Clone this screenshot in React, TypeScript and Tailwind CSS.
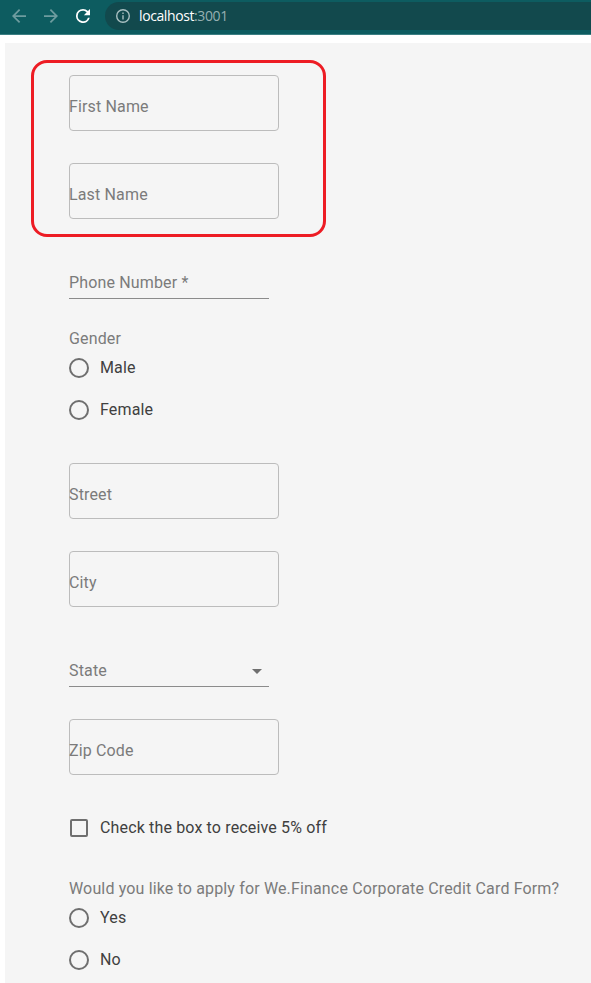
import React from "react";

function Outlined({ label, className = "" }: { label: string; className?: string }) {
  return (
    <div className={`flex h-14 w-[210px] shrink-0 items-end rounded-[4px] border border-[#bcbcbc] pb-[11px] ${className}`}>
      <span className="-ml-px h-6 whitespace-nowrap leading-6 text-[#7b7b7b]">{label}</span>
    </div>
  );
}

function Radio({ label, className = "" }: { label: string; className?: string }) {
  return (
    <div className={`flex h-[42px] shrink-0 items-center ${className}`}>
      <span className="h-5 w-5 rounded-full border-2 border-[#6f6f6f]" />
      <span className="ml-[11px] text-[#404040]">{label}</span>
    </div>
  );
}

export default function App() {
  return (
    <div className="flex h-[983px] w-[591px] flex-col overflow-hidden bg-white font-[Roboto,sans-serif] text-base leading-6 tracking-[0.15px]">
      <header className="flex h-[35px] shrink-0 items-center border-b border-[#3b7f83] bg-[#0d5c60] pb-[2px]">
        <svg className="ml-3 h-3.5 w-3.5" viewBox="4 4 16 16" fill="#6e9c9f">
          <path d="M20 11H7.83l5.59-5.59L12 4l-8 8 8 8 1.41-1.41L7.83 13H20z" />
        </svg>
        <svg className="ml-[18px] h-3.5 w-3.5" viewBox="4 4 16 16" fill="#6e9c9f">
          <path d="m12 4-1.41 1.41L16.17 11H4v2h12.17l-5.58 5.59L12 20l8-8z" />
        </svg>
        <svg className="ml-[18px] h-3.5 w-3.5" viewBox="4 4 16 16" fill="#fff">
          <path d="M17.65 6.35A7.95 7.95 0 0 0 12 4a8 8 0 1 0 7.73 10h-2.08A6 6 0 1 1 12 6c1.66 0 3.14.69 4.22 1.78L13 11h7V4z" />
        </svg>
        <div className="ml-[15px] flex h-7 flex-1 items-center rounded-l-full bg-[#12494d] pl-[11px]">
          <svg className="h-3.5 w-3.5" viewBox="2 2 20 20" fill="#a9bfc1">
            <path d="M11 7h2v2h-2zm0 4h2v6h-2zm1-9a10 10 0 1 0 0 20 10 10 0 0 0 0-20m0 18a8 8 0 1 1 0-16 8 8 0 0 1 0 16" />
          </svg>
          <span className="ml-[9px] font-['Open_Sans',sans-serif] text-[14px] tracking-[-0.4px] text-white">
            localhost<span className="text-[#96b0b2]">:3001</span>
          </span>
        </div>
      </header>
      <main className="relative ml-[5px] mt-2 flex flex-1 flex-col bg-[#f5f5f5] pl-16 pt-8">
        <div className="absolute left-[26px] top-[17px] h-[177px] w-[295px] rounded-[16px] border-[3px] border-[#ed1c24]" />
        <Outlined label="First Name" />
        <Outlined label="Last Name" className="mt-8" />
        <div className="mt-[52px] h-7 w-[200px] shrink-0 border-b border-[#8b8b8b] text-[#7b7b7b]">Phone Number *</div>
        <div className="mt-7 h-6 shrink-0 text-[#7b7b7b]">Gender</div>
        <Radio label="Male" className="-mt-1" />
        <Radio label="Female" />
        <Outlined label="Street" className="mt-8" />
        <Outlined label="City" className="mt-8" />
        <div className="mt-[52px] flex h-7 w-[200px] shrink-0 items-start justify-between border-b border-[#8b8b8b] text-[#7b7b7b]">
          State
          <span className="mr-[7px] mt-[10px] border-x-[5px] border-t-[5px] border-x-transparent border-t-[#6f6f6f]" />
        </div>
        <Outlined label="Zip Code" className="mt-8" />
        <div className="mt-8 flex h-[42px] shrink-0 items-center">
          <span className="ml-px h-[18px] w-[18px] rounded-[2px] border-2 border-[#6f6f6f]" />
          <span className="ml-3 text-[#404040]">Check the box to receive 5% off</span>
        </div>
        <div className="mt-7 h-6 shrink-0 whitespace-nowrap text-[#7b7b7b]">
          Would you like to apply for We.Finance Corporate Credit Card Form?
        </div>
        <Radio label="Yes" className="-mt-1" />
        <Radio label="No" />
      </main>
    </div>
  );
}
